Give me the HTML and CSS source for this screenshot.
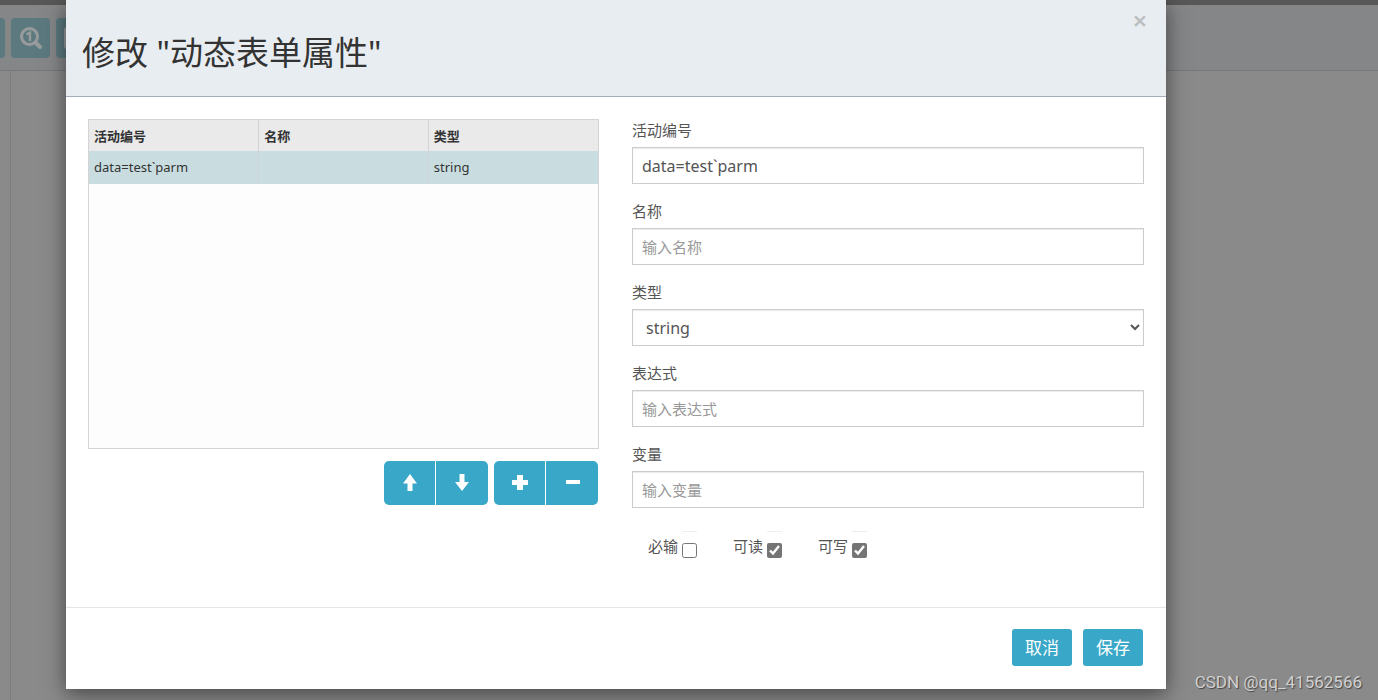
FILE: index.html
```html
<!DOCTYPE html>
<html lang="zh-CN">
<head>
<meta charset="utf-8">
<title>动态表单属性</title>
<link rel="stylesheet" href="styles.css">
</head>
<body>
<div class="page">
  <div class="topbar"></div>
  <div class="toolbar">
    <button class="tool" type="button" aria-label="缩小"></button>
    <button class="tool" type="button" aria-label="实际大小">
      <svg width="24" height="24" viewBox="0 0 24 24" fill="none" stroke="currentColor"><circle cx="10.500" cy="10.500" r="8" stroke-width="3"/><path d="M16.500 16.500l4.500 4.500" stroke-width="4" stroke-linecap="round"/><path d="M7.500 8.500l3.500-2v8.500" stroke-width="2.400"/></svg>
    </button>
    <button class="tool" type="button" aria-label="适应屏幕">
      <svg width="24" height="24" viewBox="0 0 24 24" fill="none" stroke="currentColor" stroke-width="2"><rect x="1" y="2" width="20" height="20" rx="2"/></svg>
    </button>
  </div>
  <div class="workspace"><div class="palette"></div><div class="canvas"></div></div>
</div>

<div class="modal" role="dialog" aria-labelledby="title">
  <header class="modal-header">
    <h2 id="title">修改 "动态表单属性"</h2>
    <button class="close" type="button" aria-label="关闭">×</button>
  </header>
  <form class="modal-body">
    <div class="left">
      <div class="grid-box">
        <table>
          <thead><tr><th>活动编号</th><th>名称</th><th>类型</th></tr></thead>
          <tbody><tr><td>data=test`parm</td><td></td><td>string</td></tr></tbody>
        </table>
      </div>
      <div class="actions">
        <div class="group">
          <button type="button" aria-label="上移"><svg width="18" height="18" viewBox="0 0 18 18"><path d="M9 0l7 9.500h-4.500V17h-5V9.500H2z"/></svg></button>
          <button type="button" aria-label="下移"><svg width="18" height="18" viewBox="0 0 18 18"><path d="M9 17l7-9h-4.500V0h-5v8H2z"/></svg></button>
        </div>
        <div class="group">
          <button type="button" aria-label="添加"><svg width="18" height="18" viewBox="0 0 18 18"><path d="M6 1h6v5h5v5h-5v5H6v-5H1V6h5z"/></svg></button>
          <button type="button" aria-label="删除"><svg width="18" height="18" viewBox="0 0 18 18"><path d="M3 6h14v4H3z"/></svg></button>
        </div>
      </div>
    </div>
    <div class="right">
      <div class="field"><label for="id">活动编号</label><input class="control" id="id" type="text" value="data=test`parm"></div>
      <div class="field"><label for="name">名称</label><input class="control" id="name" type="text" placeholder="输入名称"></div>
      <div class="field"><label for="type">类型</label><select class="control" id="type"><option>string</option></select></div>
      <div class="field"><label for="expr">表达式</label><input class="control" id="expr" type="text" placeholder="输入表达式"></div>
      <div class="field"><label for="var">变量</label><input class="control" id="var" type="text" placeholder="输入变量"></div>
      <div class="checks">
        <label>必输<span class="tick"><input type="checkbox"></span></label>
        <label>可读<span class="tick"><input type="checkbox" checked></span></label>
        <label>可写<span class="tick"><input type="checkbox" checked></span></label>
      </div>
    </div>
  </form>
  <footer class="modal-footer">
    <button type="button">取消</button>
    <button type="button">保存</button>
  </footer>
</div>
<div class="watermark">CSDN @qq_41562566</div>
</body>
</html>
```
FILE: styles.css
```css
* { box-sizing: border-box; }
body {
  margin: 0;
  overflow: hidden;
  background: #8a8a8a;
  color: #555;
  font: 16px/22px "Noto Sans", "Noto Sans CJK SC", sans-serif;
}
button, input, select { font: inherit; }
button { border: 0; padding: 0; cursor: pointer; }
svg { display: block; }

.page { display: flex; flex-direction: column; min-height: 100vh; }
.topbar { height: 5px; background: #575757; }
.toolbar {
  display: flex;
  gap: 6px;
  height: 66px;
  padding-top: 13px;
  margin-left: -34px;
  background: #858688;
  border-bottom: 1px solid #77757d;
}
.tool {
  display: flex;
  align-items: center;
  justify-content: center;
  width: 39px;
  height: 40px;
  border-radius: 4px;
  background: #5b797f;
  color: #989b9c;
}
.workspace { display: flex; flex: 1; }
.palette { width: 11px; border-right: 1px solid #7d7d7d; }
.canvas { flex: 1; }

.modal {
  position: absolute;
  top: 0;
  left: 66px;
  right: 212px;
  background: #fff;
  box-shadow: 0 5px 20px rgba(0, 0, 0, .5);
}
.modal-header {
  display: flex;
  justify-content: space-between;
  align-items: flex-start;
  padding: 30px 16px 20px;
  background: #e8edf1;
  border-bottom: 1px solid #a4acb9;
}
.modal-header h2 {
  margin: 0;
  font-size: 33px;
  line-height: 46px;
  font-weight: 400;
  color: #333;
}
.close {
  margin: -22px 0 0;
  width: 20px;
  background: none;
  color: #bbbfc2;
  font-size: 26px;
  line-height: 24px;
  font-weight: 600;
}
.modal-body {
  display: grid;
  grid-template-columns: 1fr 1fr;
  gap: 32px;
  padding: 22px 22px 39px;
}
.left { padding-right: 1px; }
.grid-box {
  height: 330px;
  background: #fdfdfd;
  border: 1px solid #d4d4d5;
}
table {
  width: 100%;
  table-layout: fixed;
  border-collapse: collapse;
  font-size: 13px;
  line-height: 20px;
  color: #333;
}
th, td { padding: 0 5px; text-align: left; }
th { height: 31px; background: #eaeaea; }
td { height: 33px; padding-bottom: 2px; background: #c9dde1; }
th + th, td + td { border-left: 1px solid #d0d4d6; }

.actions { display: flex; justify-content: flex-end; gap: 6px; margin-top: 12px; padding-right: 1px; }
.group { display: flex; gap: 1px; border-radius: 5px; overflow: hidden; }
.group button {
  display: flex;
  align-items: center;
  justify-content: center;
  width: 52px;
  height: 44px;
  background: #39a7c7;
  fill: #fff;
}
.group button:first-child { width: 51px; }

.field { margin-bottom: 16px; }
.field label { display: block; padding-bottom: 6px; font-size: 15px; }
.control {
  display: block;
  width: 100%;
  height: 37px;
  padding: 0 9px;
  border: 1px solid #ccc;
  border-radius: 0;
  background: #fff;
  box-shadow: inset 0 1px 1px rgba(0, 0, 0, .08);
  color: #555;
  outline: 0;
}
.control::placeholder { color: #999; font-size: 15px; }
.checks { display: flex; gap: 36px; padding: 7px 16px 0; font-size: 15px; }
.checks label { display: flex; gap: 4px; line-height: 30px; }
.tick {
  display: flex;
  align-items: center;
  width: 15px;
  height: 37px;
  border-top: 1px solid #eee;
}
.tick input { width: 15px; height: 15px; margin: 0; accent-color: #757575; }

.modal-footer {
  display: flex;
  justify-content: flex-end;
  gap: 11px;
  padding: 21px 23px 23px;
  border-top: 1px solid #e5e5e5;
}
.modal-footer button {
  width: 60px;
  height: 37px;
  border-radius: 3px;
  background: #39a7c7;
  color: #fff;
  font-size: 17px;
}
.watermark {
  position: absolute;
  right: 16px;
  bottom: 8px;
  color: #d0d0d0;
  font: 17px/20px Roboto, "Liberation Sans", sans-serif;
  text-shadow: 1px 1px 1px #444;
}
```
